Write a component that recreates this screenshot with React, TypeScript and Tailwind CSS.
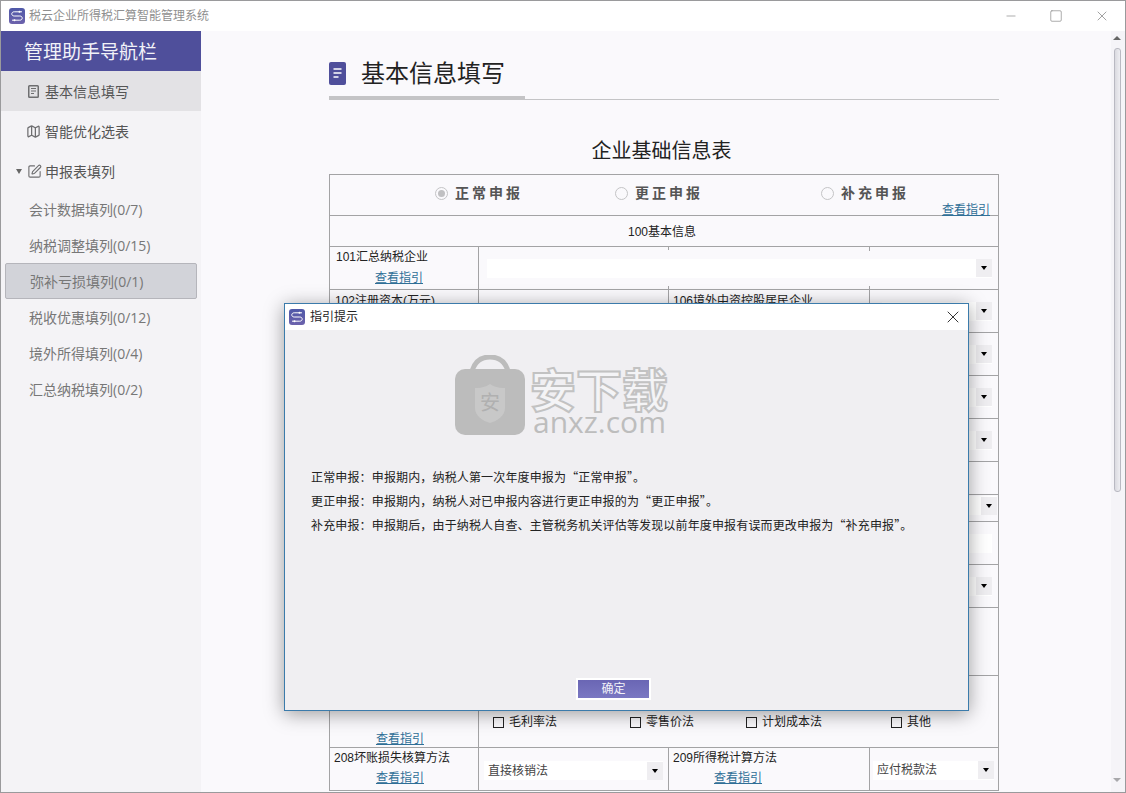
import { Map as MapIcon, SquarePen, X, Minus, Square } from 'lucide-react';
import { ReactNode } from 'react';

const navItems = [
  '会计数据填列(0/7)',
  '纳税调整填列(0/15)',
  '弥补亏损填列(0/1)',
  '税收优惠填列(0/12)',
  '境外所得填列(0/4)',
  '汇总纳税填列(0/2)',
];

const LogoIcon = ({ size = 16 }: { size?: number }) => (
  <svg width={size} height={size} viewBox="0 0 16 16">
    <defs>
      <linearGradient id="logoFill" x1="0" y1="0" x2="0" y2="1">
        <stop offset="0" stopColor="#4f58a8" />
        <stop offset="1" stopColor="#6c62ac" />
      </linearGradient>
    </defs>
    <rect width="16" height="16" rx="3" fill="url(#logoFill)" />
    <path
      d="M13 3.8H5.2C3.6 3.8 2.8 4.8 2.8 5.9S3.6 8 5.2 8h5.6c1.6 0 2.4 1 2.4 2.1s-.8 2.1-2.4 2.1H3"
      fill="none"
      stroke="#fff"
      strokeWidth="1"
    />
    <circle cx="10.5" cy="3.8" r="1" fill="#fff" />
    <circle cx="5.5" cy="12.2" r="1" fill="#fff" />
  </svg>
);

const DocIcon = () => (
  <svg width="11" height="13" viewBox="0 0 11 13" className="shrink-0">
    <rect x="0.75" y="0.75" width="9.5" height="11.5" rx="0.8" fill="none" stroke="#6e6e70" strokeWidth="1.5" />
    <path d="M3 3.5h5M3 6h5M3 8.5h3" stroke="#6e6e70" strokeWidth="1" />
  </svg>
);

const Caret = () => (
  <span className="h-0 w-0 border-x-[3.5px] border-t-[4px] border-x-transparent border-t-black" />
);

const Select = ({ value, className }: { value?: string; className: string }) => (
  <div className={`flex h-[19px] items-center justify-between bg-white ${className}`}>
    <span className="truncate pl-1 text-[12px] text-[#444]">{value}</span>
    <span className="flex h-[18px] w-4 shrink-0 items-center justify-center bg-[#efeef1]">
      <Caret />
    </span>
  </div>
);

const GuideLink = ({ className = '' }: { className?: string }) => (
  <span className={`text-[12px] leading-4 text-[#2f6f97] underline ${className}`}>查看指引</span>
);

const Check = ({ label, className }: { label: string; className: string }) => (
  <div className={`flex items-center gap-[5px] text-[12px] text-[#222] ${className}`}>
    <span className="h-[11px] w-[11px] border border-[#222]" />
    {label}
  </div>
);

const Radio = ({ label, checked }: { label: string; checked?: boolean }) => (
  <div className="flex items-center gap-[7px]">
    <span className="flex h-[13px] w-[13px] items-center justify-center rounded-full border border-[#c4c4c6]">
      {checked && <span className="h-[7px] w-[7px] rounded-full bg-[#c0c0c2]" />}
    </span>
    <span className="text-[14px] font-bold tracking-[3px] text-[#555]">{label}</span>
  </div>
);

// one table row, columns at 149 / 190 / 201 / 129
const Row = ({ h, c1, c2, c3, c4 }: { h: string; c1?: ReactNode; c2?: ReactNode; c3?: ReactNode; c4?: ReactNode }) => (
  <div className={`flex border-b border-[#a3a3a5] ${h}`}>
    <div className="w-[149px] shrink-0 border-r border-[#a3a3a5]">{c1}</div>
    <div className="w-[190px] shrink-0 border-r border-[#a3a3a5]">{c2}</div>
    <div className="w-[201px] shrink-0 border-r border-[#a3a3a5]">{c3}</div>
    <div className="relative flex-1">{c4}</div>
  </div>
);

const Sidebar = () => (
  <aside className="w-[200px] shrink-0 bg-[#f4f3f6] font-['Open_Sans','Noto_Sans_CJK_SC',sans-serif]">
    <div className="flex h-10 items-center bg-[#4f4f9b] pl-[23px] pt-[2px] text-[19px] text-[#f2f2f8]">管理助手导航栏</div>
    <div className="flex h-10 items-center gap-[6px] bg-[#e3e2e5] pl-[27px] text-[14px] text-[#555]">
      <DocIcon />
      基本信息填写
    </div>
    <div className="flex h-10 items-center gap-[4px] pl-[25px] text-[14px] text-[#555]">
      <MapIcon size={15} color="#6e6e70" strokeWidth={2} />
      智能优化选表
    </div>
    <div className="flex h-10 items-center pl-[15px] text-[14px] text-[#555]">
      <span className="mr-[5px] h-0 w-0 border-x-[3px] border-t-[5px] border-x-transparent border-t-[#666]" />
      <SquarePen size={15} color="#6e6e70" strokeWidth={1.8} />
      <span className="ml-[3px]">申报表填列</span>
    </div>
    <div className="flex flex-col">
      {navItems.map((item, i) => (
        <div
          key={item}
          className={`ml-1 flex h-9 w-[192px] items-center rounded-[2px] pl-6 text-[14px] text-[#777] ${
            i === 2 ? 'border border-[#b5b5bb] bg-[#d2d3d9]' : ''
          }`}
        >
          {item}
        </div>
      ))}
    </div>
  </aside>
);

const FormTable = () => (
  <div className="w-[670px] border border-b-0 border-[#a3a3a5]">
    <div className="relative flex h-[41px] items-center border-b border-[#a3a3a5] pb-1 pl-[105px]">
      <div className="flex w-[180px]">
        <Radio label="正常申报" checked />
      </div>
      <div className="flex w-[206px]">
        <Radio label="更正申报" />
      </div>
      <Radio label="补充申报" />
      <GuideLink className="absolute bottom-[-3px] right-2" />
    </div>
    <div className="flex h-[31px] items-center justify-center border-b border-[#a3a3a5] pr-1 pt-[2px] text-[12px] text-[#222]">
      100基本信息
    </div>
    <div className="flex h-[43px] border-b border-[#a3a3a5]">
      <div className="flex w-[149px] shrink-0 flex-col border-r border-[#a3a3a5] pl-[6px] pt-px text-[12px] text-[#222]">
        <span className="leading-[18px]">101汇总纳税企业</span>
        <GuideLink className="mt-[4px] pl-[39px]" />
      </div>
      <div className="relative flex flex-1 items-center pl-2 pr-[6px]">
        <span className="absolute left-[189px] top-0 h-[3px] w-px bg-[#a3a3a5]" />
        <span className="absolute left-[390px] top-0 h-1 w-px bg-[#a3a3a5]" />
        <span className="absolute bottom-0 left-[189px] h-[3px] w-px bg-[#a3a3a5]" />
        <span className="absolute bottom-0 left-[390px] h-[3px] w-px bg-[#a3a3a5]" />
        <Select className="w-full" />
      </div>
    </div>
    <Row
      h="h-[43px]"
      c1={<div className="pl-[5px] pt-[2px] text-[12px] leading-[18px] text-[#222]">102注册资本(万元)</div>}
      c3={<div className="pl-[4px] pt-[2px] text-[12px] leading-[18px] text-[#222]">106境外中资控股居民企业</div>}
      c4={<div className="flex h-full items-center justify-end pr-[6px]"><Select className="w-[110px]" /></div>}
    />
    {[0, 1, 2].map((i) => (
      <Row
        key={i}
        h="h-[43px]"
        c4={<div className="flex h-full items-center justify-end pr-[6px]"><Select className="w-[110px]" /></div>}
      />
    ))}
    <Row h="h-[33px]" />
    <Row
      h="h-[27px]"
      c4={<div className="flex h-full items-start justify-end pr-px pt-px"><Select className="w-[110px]" /></div>}
    />
    <Row h="h-[43px]" c4={<div className="flex h-full items-center pl-1 pr-[6px]"><div className="h-[19px] w-full bg-white" /></div>} />
    <Row
      h="h-[43px]"
      c4={<div className="flex h-full items-center justify-end pr-[6px]"><Select className="w-[110px]" /></div>}
    />
    <Row h="h-[68px]" />
    <div className="flex h-[72px] border-b border-[#a3a3a5]">
      <div className="flex w-[149px] shrink-0 items-end justify-center border-r border-[#a3a3a5] pr-2">
        <GuideLink />
      </div>
      <div className="flex flex-1 items-start pt-[37px]">
        <Check label="毛利率法" className="ml-[14px] w-[137px]" />
        <Check label="零售价法" className="w-[116px]" />
        <Check label="计划成本法" className="w-[145px]" />
        <Check label="其他" className="" />
      </div>
    </div>
    <div className="flex h-[43px] border-b border-[#a3a3a5]">
      <div className="flex w-[149px] shrink-0 flex-col items-center border-r border-[#a3a3a5] pr-2 pt-px text-[12px] text-[#222]">
        <span className="self-start pl-[4px] leading-[18px]">208坏账损失核算方法</span>
        <GuideLink className="mt-[3px]" />
      </div>
      <div className="flex w-[190px] shrink-0 items-center border-r border-[#a3a3a5] px-[5px] pt-[3px]">
        <Select value="直接核销法" className="w-full" />
      </div>
      <div className="flex w-[201px] shrink-0 flex-col items-center border-r border-[#a3a3a5] pr-[62px] pt-px text-[12px] text-[#222]">
        <span className="self-start pl-[4px] leading-[18px] whitespace-nowrap">209所得税计算方法</span>
        <GuideLink className="mt-[3px]" />
      </div>
      <div className="flex flex-1 items-center pl-[3px] pr-1 pt-[2px]">
        <Select value="应付税款法" className="w-full" />
      </div>
    </div>
  </div>
);

const Scrollbar = () => (
  <div className="flex w-[14px] shrink-0 flex-col items-center bg-[#f5f4f8] pt-[5px]">
    <span className="mr-[2px] h-0 w-0 border-x-[4px] border-b-[4px] border-x-transparent border-b-[#666]" />
    <div className="mr-[2px] mt-[8px] h-[444px] w-[7px] rounded-[3px] border border-[#b9b9c2] bg-gradient-to-r from-[#dadae0] to-[#eeeef2]" />
    <span className="mr-[2px] mt-[286px] h-0 w-0 border-x-[4px] border-t-[4px] border-x-transparent border-t-[#a8a8ab]" />
  </div>
);

const GuideDialog = () => (
  <div className="absolute left-[283px] top-[302px] flex h-[408px] w-[685px] flex-col border border-[#3b7bab] bg-[#f0eff2] shadow-[0_3px_18px_rgba(0,0,0,0.38)]">
    <div className="flex h-[26px] shrink-0 items-center justify-between bg-white pl-[4px] pr-[5px]">
      <div className="flex items-center gap-[5px] text-[12px] text-[#222]">
        <LogoIcon />
        指引提示
      </div>
      <X size={20} color="#222" strokeWidth={1.1} />
    </div>
    <div className="flex flex-1 flex-col justify-between pb-[10px] pl-[26px] pt-[135px]">
      <div className="font-['Noto_Sans_CJK_SC',sans-serif] text-[12px] leading-6 tracking-[0.15px] text-[#222]">
        <p>正常申报：申报期内，纳税人第一次年度申报为“正常申报”。</p>
        <p>更正申报：申报期内，纳税人对已申报内容进行更正申报的为“更正申报”。</p>
        <p>补充申报：申报期后，由于纳税人自查、主管税务机关评估等发现以前年度申报有误而更改申报为“补充申报”。</p>
      </div>
      <button className="ml-[265px] flex h-[22px] w-[75px] items-center justify-center border-2 border-white bg-gradient-to-b from-[#6a66b4] to-[#7a77c2] text-[12px] text-[#f2f2f8]">
        确定
      </button>
    </div>
    {/* anxz watermark */}
    <div className="absolute left-[170px] top-[51px] flex items-start gap-[5px]">
      <svg width="70" height="80" viewBox="0 0 70 80">
        <path d="M17 16C20 6 27 2 35 2s15 4 18 14" fill="none" stroke="#bcbcbc" strokeWidth="5" />
        <rect x="0" y="14" width="70" height="66" rx="10" fill="#bcbcbc" />
        <path d="M20 33c8 0 12-2 15-4 3 2 7 4 15 4v20c0 8-8 13-15 15-7-2-15-7-15-15z" fill="#c8c8c8" />
        <text x="35" y="55" textAnchor="middle" fontSize="20" fill="#b0b0b0">安</text>
      </svg>
      <div className="flex flex-col pt-[14px]">
        <span className="text-[46px] font-bold leading-[44px] text-[#f4f4f6] [-webkit-text-stroke:2px_#c2c2c2]">安下载</span>
        <span className="pl-[3px] font-['Open_Sans',sans-serif] text-[30px] leading-[18px] text-[#bdbdbd]">anxz.com</span>
      </div>
    </div>
  </div>
);

export default function App() {
  return (
    <div className="relative flex h-[793px] w-[1126px] flex-col overflow-hidden border border-[#9a9a9c] bg-[#faf9fc] font-['Liberation_Sans','Noto_Sans_CJK_SC',sans-serif]">
      <header className="flex h-[30px] shrink-0 items-center justify-between bg-white pl-2">
        <div className="flex items-center gap-[4px] text-[12px] text-[#8f8f8f]">
          <LogoIcon />
          税云企业所得税汇算智能管理系统
        </div>
        <div className="-mt-px flex items-center gap-[31px] pr-[15px] text-[#8a8a8a]">
          <Minus size={14} strokeWidth={1.2} />
          <Square size={14} strokeWidth={1.2} />
          <X size={16} strokeWidth={1.2} />
        </div>
      </header>
      <div className="flex min-h-0 flex-1">
        <Sidebar />
        <main className="min-w-0 flex-1 overflow-hidden pl-[128px] pr-[112px]">
          <div className="flex h-[69px] items-end border-b border-[#c4c4c6]">
            <div className="relative flex h-[37px] w-[196px] items-start gap-[15px] border-b-[3px] border-[#c4c4c6]">
              <svg width="17" height="23" viewBox="0 0 17 23" className="shrink-0">
                <rect width="17" height="23" rx="2" fill="#4f4f9b" />
                <path d="M4.5 7h8M4.5 11h8M4.5 15h5" stroke="#fff" strokeWidth="1.5" />
              </svg>
              <span className="-mt-[2px] whitespace-nowrap text-[24px] leading-[28px] text-[#222]">基本信息填写</span>
            </div>
          </div>
          <h2 className="flex h-[74px] w-[665px] items-center justify-center pt-[28px] text-[20px] text-[#222]">企业基础信息表</h2>
          <FormTable />
        </main>
        <Scrollbar />
      </div>
      <GuideDialog />
    </div>
  );
}
